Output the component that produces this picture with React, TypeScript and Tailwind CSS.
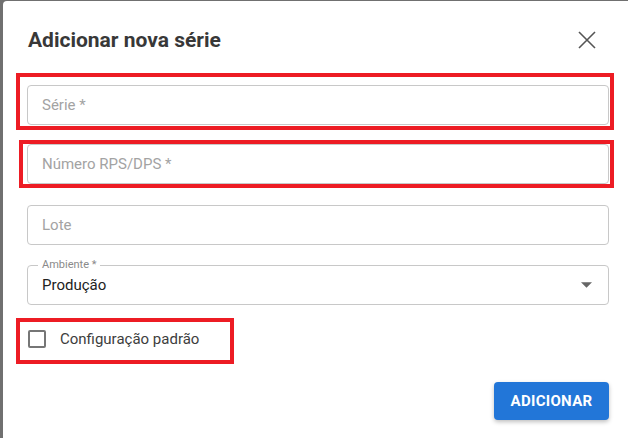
import React from 'react';

const font = { fontFamily: 'Roboto, "Noto Sans", "Liberation Sans", sans-serif' };

function TextInput({ placeholder }: { placeholder: string }) {
  return (
    <div className="flex h-[40px] w-full items-center rounded-[4px] border border-[#c8c8c8] bg-white pl-[14px]">
      <span className="text-[15px] text-[#a3a3a3]">{placeholder}</span>
    </div>
  );
}

export default function App() {
  return (
    <div className="h-[438px] w-[628px] overflow-hidden bg-[#707070] pl-[3px] pt-[1px]" style={font}>
      <div className="flex h-[460px] w-[630px] flex-col rounded-tl-[4px] bg-white px-6 pt-[25px]">
        <div className="flex h-[28px] items-center justify-between">
          <h2 className="ml-[1px] text-[21px] font-bold leading-[28px] text-[#383838]">Adicionar nova série</h2>
          <button type="button" className="mr-[13px] text-[#555555]" aria-label="Fechar">
            <svg width="18" height="18" viewBox="0 0 18 18" fill="none" stroke="currentColor" strokeWidth="1.6">
              <path d="M1 1 L17 17 M17 1 L1 17" />
            </svg>
          </button>
        </div>

        <div className="ml-[-11px] mr-[-5px] mt-[19px] border-4 border-[#ed1c24] pb-[1px] pl-[7px] pr-[1px] pt-[8px]">
          <TextInput placeholder="Série *" />
        </div>

        <div className="ml-[-8px] mr-[-5px] mt-[10px] border-4 border-[#ed1c24] pl-[4px] pr-[1px]">
          <TextInput placeholder="Número RPS/DPS *" />
        </div>

        <div className="mt-[17px]">
          <TextInput placeholder="Lote" />
        </div>

        <div className="relative mt-[20px] flex h-[40px] items-center justify-between rounded-[4px] border border-[#c8c8c8] pl-[14px] pr-[16px]">
          <span className="absolute -top-[8px] left-[10px] bg-white px-[4px] text-[11px] leading-[14px] text-[#8a8a8a]">
            Ambiente *
          </span>
          <span className="text-[15px] text-[#222222]">Produção</span>
          <svg width="11" height="6" viewBox="0 0 10 5" className="text-[#666666]">
            <path d="M0 0 L5 5 L10 0 Z" fill="currentColor" />
          </svg>
        </div>

        <div className="ml-[-11px] mt-[13px] flex h-[46px] w-[218px] items-center border-4 border-[#ed1c24] pb-[4px] pl-[8px]">
          <div className="h-[18px] w-[18px] rounded-[2px] border-2 border-[#767676]" />
          <span className="ml-[14px] text-[15px] text-[#3d3d3d]">Configuração padrão</span>
        </div>

        <div className="mt-[18px] flex justify-end">
          <button
            type="button"
            className="flex h-[38px] w-[115px] items-center justify-center rounded-[4px] bg-[#2276d8] text-[15px] font-bold tracking-[0.3px] text-white shadow-[0_2px_4px_rgba(0,0,0,0.25)]"
          >
            ADICIONAR
          </button>
        </div>
      </div>
    </div>
  );
}
